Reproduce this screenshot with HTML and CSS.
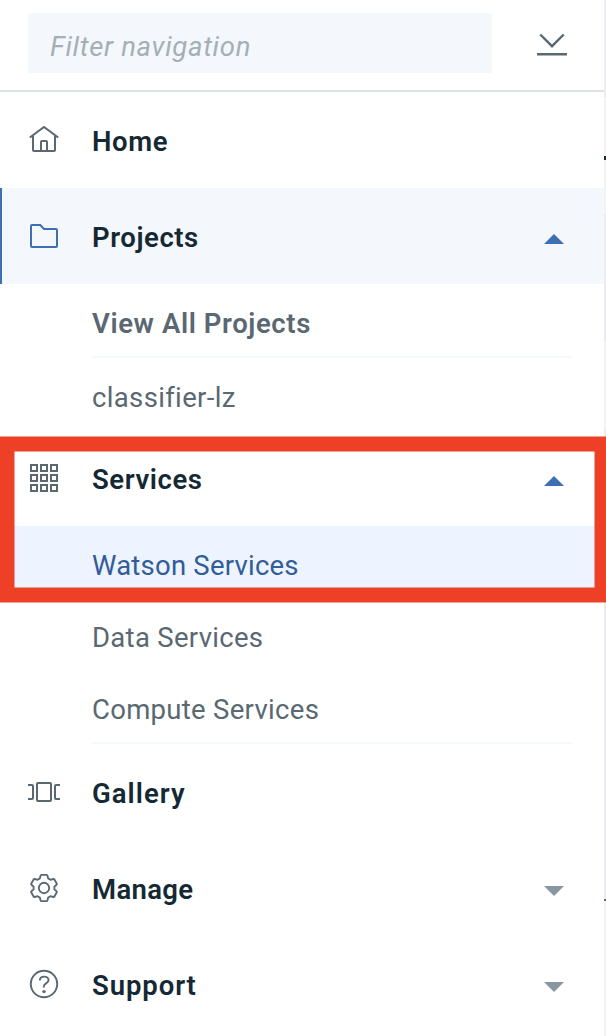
FILE: index.html
```html
<!DOCTYPE html>
<html lang="en">
<head>
<meta charset="utf-8">
<title>Navigation</title>
<link rel="stylesheet" href="styles.css">
</head>
<body>
<div class="app">
  <nav class="sidebar">
    <header class="filter">
      <input class="filter-input" type="text" placeholder="Filter navigation" aria-label="Filter navigation">
      <svg class="collapse" viewBox="0 0 32 26"><path d="M4.300 3.500 16 15.200 27.700 3.500M1 23.200H31"/></svg>
    </header>

    <div class="item">
      <svg class="icon" viewBox="0 0 32 32"><path d="M1.800 13.500 16 3l14.200 10.500M5 12v14q0 1 1 1h20q1 0 1-1V12M13 27v-9q0-1 1-1h4q1 0 1 1v9"/></svg>
      <span class="label home">Home</span>
    </div>

    <div class="item current">
      <svg class="icon" viewBox="0 0 32 32"><path d="M3 6q0-1 1-1h8.300l3.700 4h12q1 0 1 1v16q0 1-1 1H4q-1 0-1-1z"/></svg>
      <span class="label projects">Projects</span>
      <svg class="caret open" viewBox="0 0 20 10"><path d="M0 10 10 0l10 10z"/></svg>
    </div>
    <div class="sub"><span class="sublabel strong view">View All Projects</span></div>
    <div class="divider"></div>
    <div class="sub"><span class="sublabel classifier">classifier-lz</span></div>

    <div class="item">
      <svg class="icon crisp" viewBox="0 0 32 32"><path d="M3 3h6v6H3zM13 3h6v6h-6zM23 3h6v6h-6zM3 13h6v6H3zM13 13h6v6h-6zM23 13h6v6h-6zM3 23h6v6H3zM13 23h6v6h-6zM23 23h6v6h-6z"/></svg>
      <span class="label services">Services</span>
      <svg class="caret open" viewBox="0 0 20 10"><path d="M0 10 10 0l10 10z"/></svg>
    </div>
    <div class="sub selected"><span class="sublabel watson">Watson Services</span></div>
    <div class="sub"><span class="sublabel data">Data Services</span></div>
    <div class="sub"><span class="sublabel compute">Compute Services</span></div>
    <div class="divider"></div>

    <div class="item">
      <svg class="icon" viewBox="0 0 32 32"><rect x="9" y="7" width="14" height="18" rx="1"/><path d="M0 9h4q1 0 1 1v12q0 1-1 1H0M32 9h-4q-1 0-1 1v12q0 1 1 1h4"/></svg>
      <span class="label gallery">Gallery</span>
    </div>
    <div class="item">
      <svg class="icon gear" viewBox="0 0 32 32"><circle cx="16" cy="16" r="5.200"/><path d="M13.500 2.900h5q.8 0 1 .8l.6 2.700 2.400 1.400 2.700-.8q.8-.2 1.200.5l2.300 4q.4.700-.2 1.200l-2.100 1.900v2.800l2.100 1.900q.6.500.2 1.200l-2.300 4q-.4.700-1.200.5l-2.700-.8-2.400 1.400-.6 2.700q-.2.800-1 .8h-5q-.8 0-1-.8l-.6-2.700-2.400-1.400-2.700.8q-.8.200-1.200-.5l-2.300-4q-.4-.7.200-1.200l2.100-1.900v-2.800l-2.100-1.900q-.6-.5-.2-1.200l2.300-4q.4-.7 1.200-.5l2.700.8 2.400-1.400.6-2.700q.2-.8 1-.8z"/></svg>
      <span class="label manage">Manage</span>
      <svg class="caret" viewBox="0 0 20 10"><path d="M0 0h20L10 10z"/></svg>
    </div>
    <div class="item">
      <svg class="icon help" viewBox="0 0 32 32"><circle cx="16" cy="16" r="13.200"/><path d="M11.800 12.400c0-5 8.800-5 8.800-.4 0 3.600-4.700 3-4.700 6.200v1.300"/><circle class="dot" cx="16" cy="23.600" r="1.700"/></svg>
      <span class="label support">Support</span>
      <svg class="caret" viewBox="0 0 20 10"><path d="M0 0h20L10 10z"/></svg>
    </div>
  </nav>
  <div class="edge">
    <div class="seg top"></div>
    <div class="seg upper"></div>
    <div class="seg mark"></div>
    <div class="seg mid"></div>
    <div class="seg panel"></div>
    <div class="seg gap"></div>
    <div class="seg panel lower"></div>
    <div class="seg line"></div>
    <div class="seg rest"></div>
  </div>
  <svg class="highlight" viewBox="0 0 606 1036"><rect x="7" y="444" width="595" height="151"/></svg>
</div>
</body>
</html>
```

FILE: styles.css
```css
* { box-sizing: border-box; }
body { margin: 0; background: #fff; font-family: Roboto, sans-serif; }
.app { position: relative; display: flex; width: 606px; height: 1036px; overflow: hidden; }
.sidebar { width: 604px; background: #fff; }
.filter { display: flex; align-items: flex-start; height: 92px; padding: 13px 36px 0 28px; border-bottom: 2px solid #dfe3e6; }
.filter-input {
  width: 464px; height: 60px; padding: 6px 22px 0; border: 0; border-radius: 0;
  background: #f4f7fb; font: italic 400 27.5px Roboto, sans-serif; letter-spacing: 0.68px;
}
.filter-input::placeholder { color: #a5afb6; opacity: 1; }
.collapse { width: 32px; height: 26px; margin: 18px 0 0 44px; fill: none; stroke: #5a6872; stroke-width: 2.4; }
.item { display: flex; align-items: center; height: 96px; padding: 0 40px 0 28px; }
.current { background: #f4f7fb; box-shadow: inset 2px 0 #3d70b2; }
.icon { width: 32px; height: 32px; flex: none; fill: none; stroke: #5a6872; stroke-width: 2; }
.current .icon { stroke: #3d70b2; }
.crisp { shape-rendering: crispEdges; }
.gear, .help { stroke-width: 1.9; stroke-linejoin: round; }
.dot { fill: #5a6872; stroke: none; }
.label { margin: 3px auto 0 32px; color: #152935; font-size: 27.5px; font-weight: 600; line-height: 32px; white-space: nowrap; }
.caret { width: 20px; height: 10px; margin-top: 6px; fill: #8897a2; }
.caret.open { fill: #3d70b2; }
.sub { display: flex; align-items: center; height: 72px; padding: 7px 0 0 92px; }
.sublabel { color: #5a6872; font-size: 27.5px; line-height: 32px; white-space: nowrap; }
.strong { font-weight: 600; }
.home { letter-spacing: 0.6px; }
.projects { letter-spacing: 0.57px; }
.view { letter-spacing: 0.6px; }
.classifier { letter-spacing: 0.35px; }
.services { letter-spacing: 0.57px; }
.watson { letter-spacing: 0.22px; }
.data { letter-spacing: 0.3px; }
.compute { letter-spacing: 0.3px; }
.gallery { letter-spacing: 1.05px; }
.manage { letter-spacing: 0.35px; }
.support { letter-spacing: 0.9px; }
.selected { background: #edf4ff; }
.selected .sublabel { color: #325c9a; }
.divider { height: 2px; margin: 0 32px 0 92px; background: #f4f7fb; }
.edge { display: flex; flex-direction: column; width: 2px; height: 1036px; background: #f3f3f5; }
.top { height: 97px; background: #ececf1; }
.upper { height: 59px; }
.mark { height: 4px; background: #152935; }
.mid { height: 54px; }
.panel { height: 127px; background: #ebebf0; }
.gap { height: 87px; }
.lower { height: 471px; }
.line { height: 2px; background: #5a6872; }
.highlight { position: absolute; left: 0; top: 0; width: 606px; height: 1036px; fill: none; stroke: #ed4026; stroke-width: 15; pointer-events: none; }
```
